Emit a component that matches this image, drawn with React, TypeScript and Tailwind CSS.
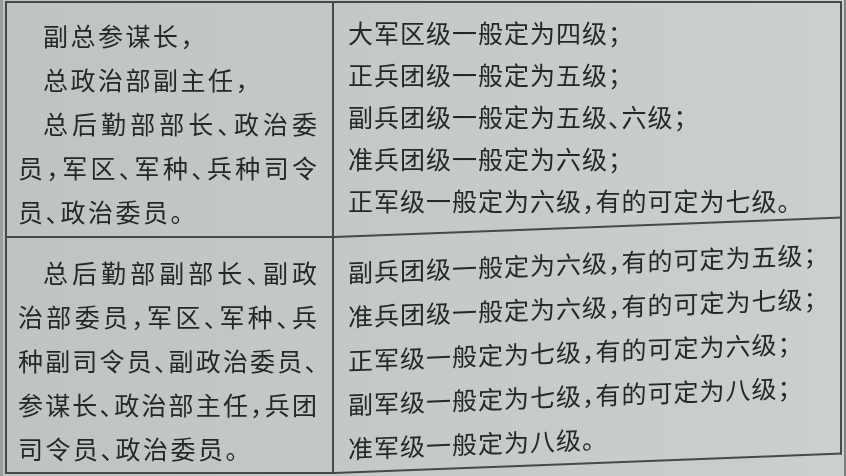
const cjk = "font-['Noto_Sans_CJK_SC','Noto_Sans_CJK_TC',sans-serif]";

type Line = { text: string; indent?: boolean; justify?: boolean };

const topLeft: Line[] = [
  { text: "副总参谋长，", indent: true },
  { text: "总政治部副主任，", indent: true },
  { text: "总后勤部部长、政治委", indent: true, justify: true },
  { text: "员，军区、军种、兵种司令", justify: true },
  { text: "员、政治委员。" },
];

const bottomLeft: Line[] = [
  { text: "总后勤部副部长、副政", indent: true, justify: true },
  { text: "治部委员，军区、军种、兵", justify: true },
  { text: "种副司令员、副政治委员、", justify: true },
  { text: "参谋长、政治部主任，兵团", justify: true },
  { text: "司令员、政治委员。" },
];

const topRight = [
  "大军区级一般定为四级；",
  "正兵团级一般定为五级；",
  "副兵团级一般定为五级、六级；",
  "准兵团级一般定为六级；",
  "正军级一般定为六级，有的可定为七级。",
];

const bottomRight = [
  "副兵团级一般定为六级，有的可定为五级；",
  "准兵团级一般定为六级，有的可定为七级；",
  "正军级一般定为七级，有的可定为六级；",
  "副军级一般定为七级，有的可定为八级；",
  "准军级一般定为八级。",
];

function LeftLines({ lines }: { lines: Line[] }) {
  return (
    <>
      {lines.map((l) => (
        <div
          key={l.text}
          className={
            "whitespace-nowrap [font-feature-settings:'halt'] " +
            (l.indent ? "pl-[25px] " : "") +
            (l.justify
              ? "text-justify tracking-normal [text-align-last:justify]"
              : "tracking-[2.5px]")
          }
        >
          {l.text}
        </div>
      ))}
    </>
  );
}

function RightLines({ lines }: { lines: string[] }) {
  return (
    <>
      {lines.map((t) => (
        <div key={t} className="whitespace-nowrap tracking-[1px] [font-feature-settings:'halt']">
          {t}
        </div>
      ))}
    </>
  );
}

export default function App() {
  return (
    <div
      className={`${cjk} h-[476px] w-[846px] overflow-hidden border-l-[3px] border-r-2 border-l-[#9aa09f] border-r-[#7c8281] bg-linear-to-r from-[#bfc3c2] via-[#c5c9c8] to-[#cbcfce] text-[25px] text-[#25282a]`}
    >
      <div className="ml-[2px] mt-[1px] flex w-[837px] flex-col blur-[0.4px]">
        {/* first group */}
        <div className="flex h-[235px] border-x-2 border-t-2 border-[#45494b]">
          <div className="w-[327px] shrink-0 border-r-2 border-[#45494b] pl-[11px] pr-[15px] pt-[10px] leading-[44px]">
            <LeftLines lines={topLeft} />
          </div>
          <div className="flex-1 pl-[14px] pt-[8px] leading-[42px]">
            <RightLines lines={topRight} />
          </div>
        </div>

        {/* second group, right half bends up with the page */}
        <div className="flex">
          <div className="h-[238px] w-[329px] shrink-0 border-2 border-[#45494b] pl-[11px] pr-[15px] pt-[12px] leading-[44px]">
            <LeftLines lines={bottomLeft} />
          </div>
          <div className="h-[238px] flex-1 origin-top-left border-y-2 border-r-2 border-[#45494b] pl-[14px] pt-[12px] leading-[44px] [transform:skewY(-2.2deg)]">
            <RightLines lines={bottomRight} />
          </div>
        </div>
      </div>
    </div>
  );
}
